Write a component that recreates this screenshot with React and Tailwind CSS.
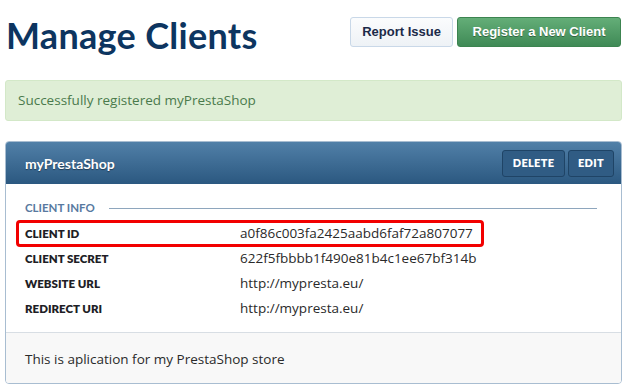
import React from 'react';

const rows = [
    { label: 'CLIENT ID', value: 'a0f86c003fa2425aabd6faf72a807077', marked: true },
    { label: 'CLIENT SECRET', value: '622f5fbbbb1f490e81b4c1ee67bf314b' },
    { label: 'WEBSITE URL', value: 'http://mypresta.eu/' },
    { label: 'REDIRECT URI', value: 'http://mypresta.eu/' },
];

const App = () => {
    return (
        <div className="w-[627px] h-[390px] bg-white font-['Lato','Open_Sans',sans-serif] overflow-hidden">
            {/* Header */}
            <div className="flex items-start justify-between pl-[6px] pr-[6px] pt-[17px] h-[80px]">
                <h1 className="text-[36px] leading-[30px] mt-[3px] font-bold text-[#0d3560] tracking-[0.3px]">Manage Clients</h1>
                <div className="flex gap-[4px]">
                    <button className="h-[30px] w-[103px] rounded-[3px] border border-[#c9d8e8] bg-gradient-to-b from-[#fbfcfd] to-[#eef2f6] text-[13px] font-bold text-[#1b2a48] font-['Liberation_Sans',sans-serif]">
                        Report Issue
                    </button>
                    <button className="h-[30px] w-[164px] rounded-[3px] border border-[#3c8450] bg-gradient-to-b from-[#64ae78] to-[#3f8a56] text-[13px] font-bold text-white [text-shadow:0_1px_0_rgba(0,0,0,0.35)] font-['Liberation_Sans',sans-serif]">
                        Register a New Client
                    </button>
                </div>
            </div>

            {/* Alert */}
            <div className="mx-[5px] h-[41px] rounded-[3px] border border-[#d3e8c8] bg-[#dfeed6] flex items-center px-[12px] text-[13.5px] text-[#4a7a4c] font-['Open_Sans',sans-serif]">
                Successfully registered myPrestaShop
            </div>

            {/* Panel */}
            <div className="mx-[5px] mt-[20px] w-[617px] h-[243px] rounded-[4px] border border-[#a8bdd1] overflow-hidden flex flex-col">
                <div className="h-[42px] bg-gradient-to-b from-[#5180a8] to-[#2b5880] flex items-center justify-between pl-[19px] pr-[7px] shrink-0">
                    <span className="text-[14px] font-bold text-white [text-shadow:0_1px_1px_rgba(0,0,0,0.4)]">myPrestaShop</span>
                    <div className="flex gap-[3px]">
                        <button className="h-[27px] w-[63px] rounded-[3px] border border-[#1f4466] bg-[#305c84] text-[11px] font-extrabold text-white tracking-[0.3px]">DELETE</button>
                        <button className="h-[27px] w-[46px] rounded-[3px] border border-[#1f4466] bg-[#305c84] text-[11px] font-extrabold text-white tracking-[0.3px]">EDIT</button>
                    </div>
                </div>

                <div className="flex-1 bg-white pt-[15px] px-[19px]">
                    <div className="flex items-center gap-[14px] h-[18px]">
                        <span className="text-[11.5px] font-bold text-[#5879a0]">CLIENT INFO</span>
                        <div className="h-px w-[488px] bg-[#8ea6bd]" />
                    </div>
                    <div className="mt-[4px]">
                        {rows.map((row) => (
                            <div key={row.label} className="relative flex items-center h-[25px]">
                                {row.marked && (
                                    <div className="absolute left-[-9px] top-[-1px] w-[468px] h-[27px] rounded-[4px] border-[3px] border-[#f20000]" />
                                )}
                                <span className="w-[215px] text-[11.5px] font-extrabold text-[#1e1e26]">{row.label}</span>
                                <span className="text-[13.5px] text-[#2a2a2a] font-['Open_Sans',sans-serif]">{row.value}</span>
                            </div>
                        ))}
                    </div>
                </div>

                <div className="h-[51px] shrink-0 border-t border-[#d8dee4] bg-[#f8f8f8] flex items-center pt-[2px] px-[19px] text-[13.5px] text-[#2a2a2a] font-['Open_Sans',sans-serif]">
                    This is aplication for my PrestaShop store
                </div>
            </div>
        </div>
    );
};

export default App;
